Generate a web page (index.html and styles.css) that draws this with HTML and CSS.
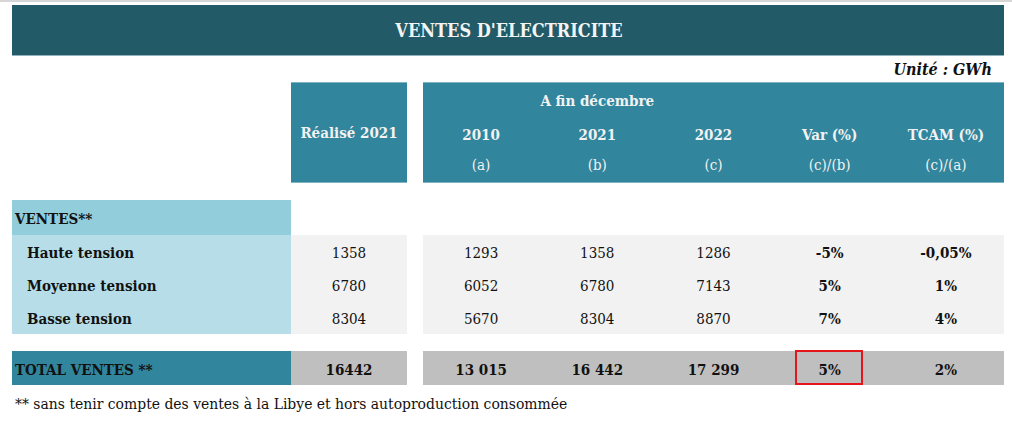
FILE: index.html
```html
<!DOCTYPE html>
<html lang="fr">
<head>
<meta charset="utf-8">
<title>Ventes d'électricité</title>
<link rel="stylesheet" href="styles.css">
</head>
<body>
<div class="page">
  <div class="title">VENTES D'ELECTRICITE</div>
  <div class="unit">Unité : GWh</div>
  <div class="table">
    <div class="row head">
      <div class="blank"></div>
      <div class="realise">Réalisé 2021</div>
      <div class="sep"></div>
      <div class="headright">
        <div class="hline l1"><span></span><span>A fin décembre</span></div>
        <div class="hline l2"><span>2010</span><span>2021</span><span>2022</span><span>Var (%)</span><span>TCAM (%)</span></div>
        <div class="hline l3"><span>(a)</span><span>(b)</span><span>(c)</span><span>(c)/(b)</span><span>(c)/(a)</span></div>
      </div>
    </div>
    <div class="row section"><div class="label sec">VENTES**</div></div>
    <div class="row data">
      <div class="label sub">Haute tension</div><div class="num g">1358</div><div class="sep"></div>
      <div class="num g">1293</div><div class="num g">1358</div><div class="num g">1286</div><div class="num g b">-5%</div><div class="num g b">-0,05%</div>
    </div>
    <div class="row data">
      <div class="label sub">Moyenne tension</div><div class="num g">6780</div><div class="sep"></div>
      <div class="num g">6052</div><div class="num g">6780</div><div class="num g">7143</div><div class="num g b">5%</div><div class="num g b">1%</div>
    </div>
    <div class="row data last">
      <div class="label sub">Basse tension</div><div class="num g">8304</div><div class="sep"></div>
      <div class="num g">5670</div><div class="num g">8304</div><div class="num g">8870</div><div class="num g b">7%</div><div class="num g b">4%</div>
    </div>
    <div class="row total">
      <div class="label tot">TOTAL VENTES **</div><div class="num t">16442</div><div class="sep"></div>
      <div class="num t">13 015</div><div class="num t">16 442</div><div class="num t">17 299</div><div class="num t mark"><span class="box"></span>5%</div><div class="num t">2%</div>
    </div>
  </div>
  <div class="note">** sans tenir compte des ventes à la Libye et hors autoproduction consommée</div>
</div>
</body>
</html>
```
FILE: styles.css
```css
html, body {
  margin: 0;
  padding: 0;
  background: #ffffff;
}
body {
  border-top: 2px solid #d6d6d6;
  font-family: "DejaVu Serif Condensed", "DejaVu Serif", "Liberation Serif", serif;
  font-stretch: condensed;
  color: #111111;
}
.page {
  padding: 3px 8px 0 12px;
  width: 992px;
}
.title {
  height: 50px;
  background: #225a67;
  border-bottom: 1px solid #8fb2bb;
  color: #f4f4f4;
  font-weight: bold;
  font-size: 18px;
  display: flex;
  align-items: center;
  justify-content: center;
  padding-left: 2px;
}
.unit {
  height: 26px;
  display: flex;
  align-items: center;
  justify-content: flex-end;
  padding-right: 12px;
  font-weight: bold;
  font-style: italic;
  font-size: 16px;
  color: #111;
}
.row {
  display: grid;
  grid-template-columns: 279px 116px 16px repeat(5, 1fr);
}
.head {
  height: 101px;
  margin-bottom: 17px;
}
.realise, .headright {
  background: #31859c;
  border-top: 1px solid #7eb3c2;
  border-bottom: 1px solid #7eb3c2;
  color: #f2f2f2;
  font-weight: bold;
  font-size: 15px;
}
.realise {
  display: flex;
  align-items: center;
  justify-content: center;
}
.headright {
  grid-column: 4 / span 5;
  display: flex;
  flex-direction: column;
  padding-top: 6px;
}
.hline {
  display: grid;
  grid-template-columns: repeat(5, 1fr);
  text-align: center;
  align-items: center;
}
.l1 { height: 24px; }
.l2 { height: 28px; margin-top: 8px; }
.l3 { height: 28px; margin-top: 2px; font-weight: normal; }
.section {
  height: 35px;
}
.label {
  display: flex;
  align-items: center;
  font-weight: bold;
  font-size: 15px;
  color: #111;
}
.sec {
  background: #92cddc;
  padding: 2px 0 0 3px;
}
.sub {
  background: #b7dee8;
  padding: 3px 0 0 15px;
}
.data { height: 33px; }
.data.last { margin-bottom: 17px; }
.num {
  display: flex;
  align-items: center;
  justify-content: center;
  font-size: 15px;
  padding-top: 3px;
}
.g { background: #f2f2f2; }
.b { font-weight: bold; }
.total { height: 34px; }
.tot {
  background: #31859c;
  padding: 3px 0 0 3px;
  color: #111;
}
.t {
  background: #bfbfbf;
  font-weight: bold;
}
.mark { position: relative; }
.box {
  position: absolute;
  left: calc(50% - 35px);
  top: -1px;
  width: 64px;
  height: 31px;
  border: 2px solid #e3161b;
}
.note {
  padding: 10px 0 0 3px;
  font-size: 15.5px;
  color: #111;
}
```
